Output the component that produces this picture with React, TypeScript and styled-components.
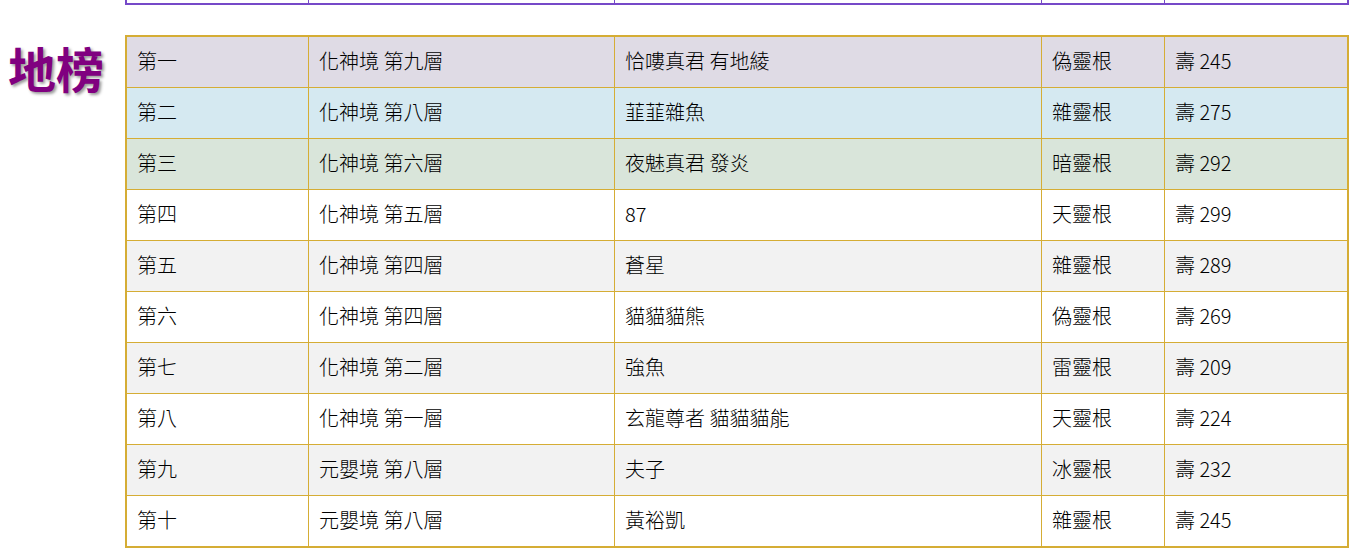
import React from "react";
import styled, { createGlobalStyle } from "styled-components";

const Global = createGlobalStyle`
  html, body { margin: 0; padding: 0; background: #fff; }
  body { font-family: "Noto Sans CJK TC", "Noto Sans", sans-serif; }
`;

const Page = styled.div`
  padding: 0 20px 0 8px;
  display: flex;
  flex-direction: column;
  gap: 30px;
`;

const Section = styled.section`
  display: grid;
  grid-template-columns: 117px 1224px;
  align-items: start;
`;

const Title = styled.h2`
  margin: 0;
  padding-top: 8px;
  font-size: 48px;
  line-height: 48px;
  font-weight: 700;
  color: #800080;
  text-shadow: 2px 2px 3px #999;
  letter-spacing: 0;
`;

const COLS = "181px 305px 426px 122px 182px";

const Board = styled.div<{ $line: string }>`
  display: grid;
  grid-template-columns: ${COLS};
  gap: 1px;
  padding: 2px;
  background: ${(p) => p.$line};
`;

const StubRow = styled.div`
  display: contents;
`;

const StubCell = styled.div`
  height: 3px;
  background: #fff;
`;

const TopBoard = styled(Board)`
  padding-top: 0;
`;

const Row = styled.div`
  display: contents;
`;

const Cell = styled.div<{ $bg: string }>`
  box-sizing: border-box;
  height: 50px;
  display: flex;
  align-items: center;
  padding: 0 10px 3px;
  background: ${(p) => p.$bg};
  color: #000;
  font-size: 20px;
  font-weight: 300;
  white-space: nowrap;
`;

const rows: [string, string, string, string, string][] = [
  ["第一", "化神境 第九層", "恰嘍真君 有地綾", "偽靈根", "壽 245"],
  ["第二", "化神境 第八層", "韮韮雜魚", "雜靈根", "壽 275"],
  ["第三", "化神境 第六層", "夜魅真君 發炎", "暗靈根", "壽 292"],
  ["第四", "化神境 第五層", "87", "天靈根", "壽 299"],
  ["第五", "化神境 第四層", "蒼星", "雜靈根", "壽 289"],
  ["第六", "化神境 第四層", "貓貓貓熊", "偽靈根", "壽 269"],
  ["第七", "化神境 第二層", "強魚", "雷靈根", "壽 209"],
  ["第八", "化神境 第一層", "玄龍尊者 貓貓貓能", "天靈根", "壽 224"],
  ["第九", "元嬰境 第八層", "夫子", "冰靈根", "壽 232"],
  ["第十", "元嬰境 第八層", "黃裕凱", "雜靈根", "壽 245"],
];

const rowBg = (i: number) => {
  if (i === 0) return "#dfdbe5";
  if (i === 1) return "#d5e9f1";
  if (i === 2) return "#d9e5da";
  return i % 2 === 0 ? "#f2f2f2" : "#ffffff";
};

export default function App() {
  return (
    <>
      <Global />
      <Page>
        <Section>
          <div />
          <TopBoard $line="#7649c8">
            <StubRow>
              {[0, 1, 2, 3, 4].map((k) => (
                <StubCell key={k} />
              ))}
            </StubRow>
          </TopBoard>
        </Section>
        <Section>
          <Title>地榜</Title>
          <Board $line="#d5ad35">
            {rows.map((r, i) => (
              <Row key={i}>
                {r.map((c, j) => (
                  <Cell key={j} $bg={rowBg(i)}>
                    {c}
                  </Cell>
                ))}
              </Row>
            ))}
          </Board>
        </Section>
      </Page>
    </>
  );
}
